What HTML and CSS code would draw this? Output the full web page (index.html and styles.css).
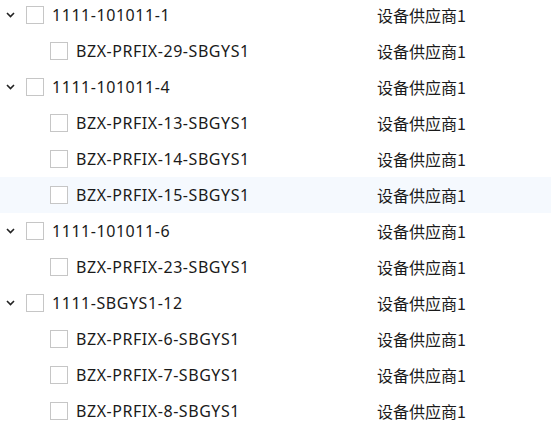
FILE: index.html
```html
<!DOCTYPE html>
<html>
<head>
<meta charset="utf-8">
<link rel="stylesheet" href="styles.css">
</head>
<body>
<div class="tree">
  <div class="row"><div class="name"><span class="caret"><svg width="9" height="6" viewBox="0 0 9 6"><path d="M1 1 L4.5 4.5 L8 1" fill="none" stroke="#222" stroke-width="1.6"/></svg></span><span class="cb"></span><span class="label">1111-101011-1</span></div><div class="sup">设备供应商1</div></div>
  <div class="row child"><div class="name"><span class="cb"></span><span class="label">BZX-PRFIX-29-SBGYS1</span></div><div class="sup">设备供应商1</div></div>
  <div class="row"><div class="name"><span class="caret"><svg width="9" height="6" viewBox="0 0 9 6"><path d="M1 1 L4.5 4.5 L8 1" fill="none" stroke="#222" stroke-width="1.6"/></svg></span><span class="cb"></span><span class="label">1111-101011-4</span></div><div class="sup">设备供应商1</div></div>
  <div class="row child"><div class="name"><span class="cb"></span><span class="label">BZX-PRFIX-13-SBGYS1</span></div><div class="sup">设备供应商1</div></div>
  <div class="row child"><div class="name"><span class="cb"></span><span class="label">BZX-PRFIX-14-SBGYS1</span></div><div class="sup">设备供应商1</div></div>
  <div class="row child hover"><div class="name"><span class="cb"></span><span class="label">BZX-PRFIX-15-SBGYS1</span></div><div class="sup">设备供应商1</div></div>
  <div class="row"><div class="name"><span class="caret"><svg width="9" height="6" viewBox="0 0 9 6"><path d="M1 1 L4.5 4.5 L8 1" fill="none" stroke="#222" stroke-width="1.6"/></svg></span><span class="cb"></span><span class="label">1111-101011-6</span></div><div class="sup">设备供应商1</div></div>
  <div class="row child"><div class="name"><span class="cb"></span><span class="label">BZX-PRFIX-23-SBGYS1</span></div><div class="sup">设备供应商1</div></div>
  <div class="row"><div class="name"><span class="caret"><svg width="9" height="6" viewBox="0 0 9 6"><path d="M1 1 L4.5 4.5 L8 1" fill="none" stroke="#222" stroke-width="1.6"/></svg></span><span class="cb"></span><span class="label">1111-SBGYS1-12</span></div><div class="sup">设备供应商1</div></div>
  <div class="row child"><div class="name"><span class="cb"></span><span class="label">BZX-PRFIX-6-SBGYS1</span></div><div class="sup">设备供应商1</div></div>
  <div class="row child"><div class="name"><span class="cb"></span><span class="label">BZX-PRFIX-7-SBGYS1</span></div><div class="sup">设备供应商1</div></div>
  <div class="row child"><div class="name"><span class="cb"></span><span class="label">BZX-PRFIX-8-SBGYS1</span></div><div class="sup">设备供应商1</div></div>
</div>
</body>
</html>
```
FILE: styles.css
```css
html, body { margin: 0; padding: 0; background: #fff; overflow: hidden; }
body { font-family: "Noto Sans", "Noto Sans CJK SC", sans-serif; font-size: 16px; color: #1a1a1a; }
.tree { margin-top: -3px; }
.row { display: flex; align-items: center; height: 36px; }
.row.hover { background: #f5f9fe; }
.name { width: 377px; display: flex; align-items: center; padding-left: 6px; box-sizing: border-box; }
.row.child .name { padding-left: 50px; }
.caret { width: 20px; display: flex; align-items: center; height: 6px; }
.caret svg { display: block; }
.cb { width: 16px; height: 16px; border: 1px solid #c6c6c6; background: #fff; margin-right: 8px; flex: none; }
.label { white-space: nowrap; letter-spacing: 0.55px; }
.sup { white-space: nowrap; font-family: "Noto Sans CJK SC", sans-serif; font-size: 16px; }
```
